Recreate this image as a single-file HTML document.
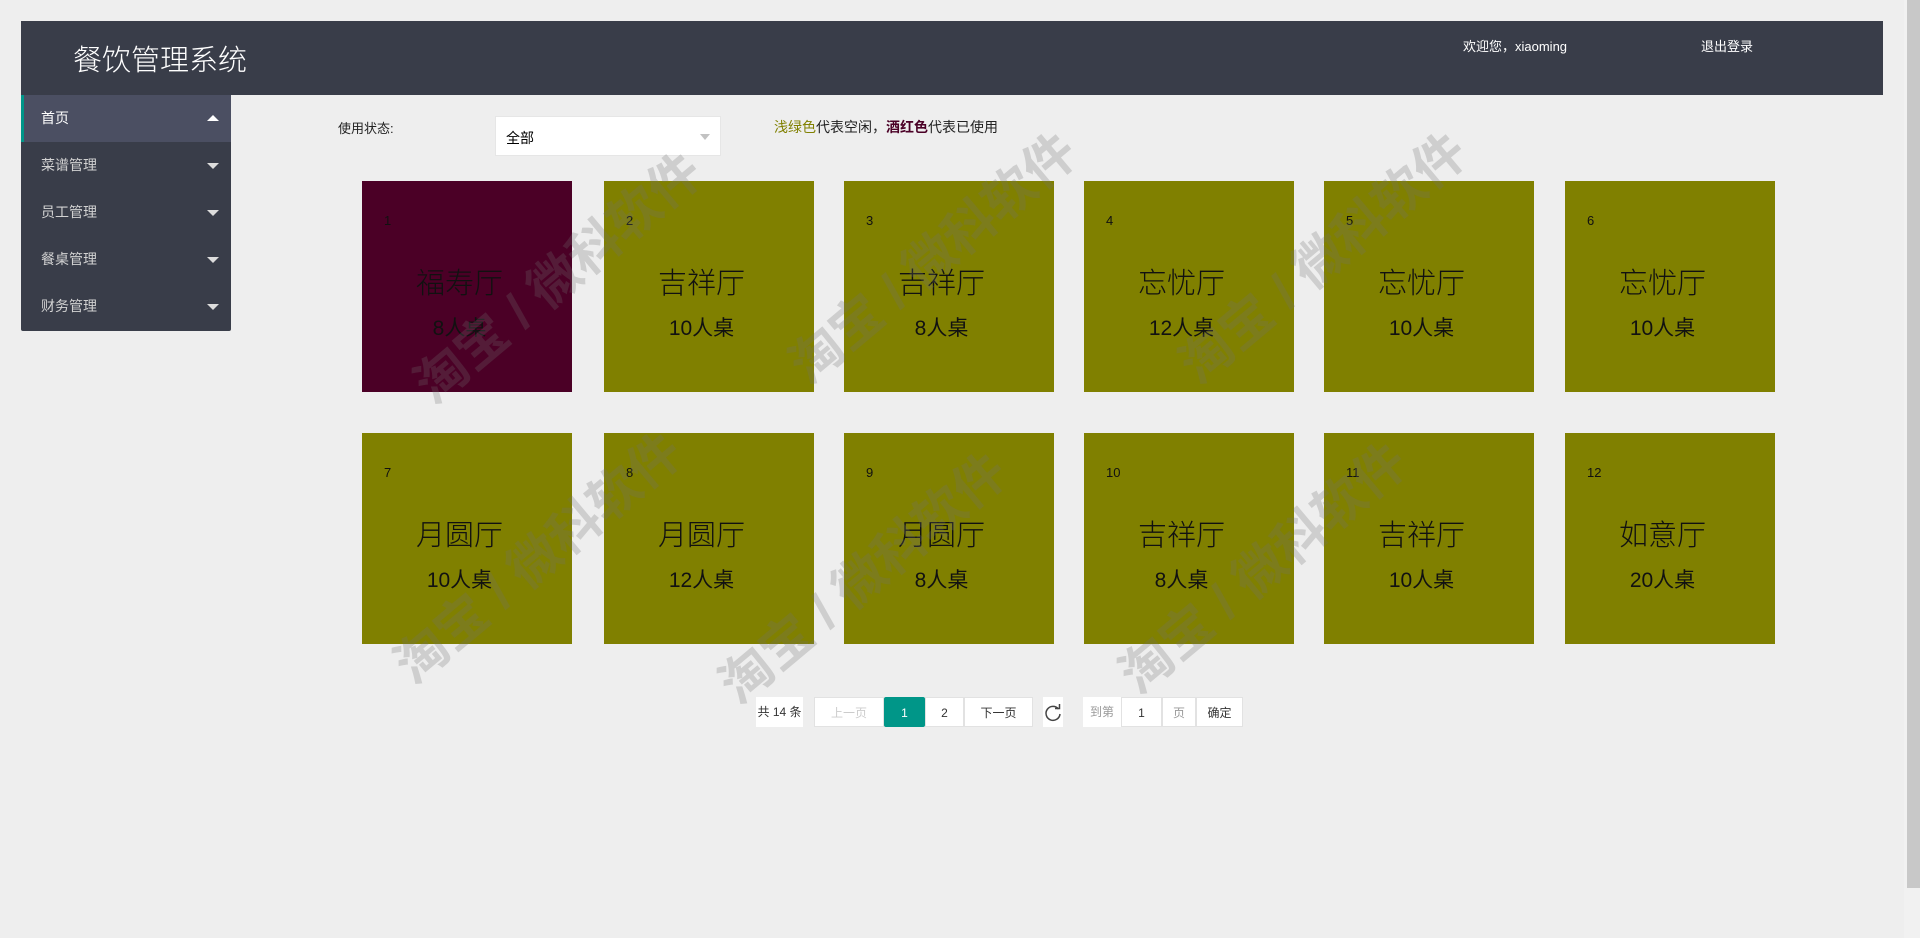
<!DOCTYPE html>
<html><head><meta charset="utf-8"><style>
*{margin:0;padding:0;box-sizing:border-box}
body{width:1920px;height:938px;background:#eeeeee;font-family:"Liberation Sans","Noto Sans CJK SC",sans-serif;position:relative;overflow:hidden}
.hdr{position:absolute;left:21px;top:21px;width:1862px;height:74px;background:#393d49;color:#fff}
.hdr .t{position:absolute;left:52px;top:16px;font-size:29px;font-weight:300}
.hdr .w{position:absolute;left:1442px;top:15px;font-size:13px}
.hdr .o{position:absolute;left:1680px;top:15px;font-size:13px}
.sb{position:absolute;right:0;top:0;width:16px;height:938px;background:#f1f1f1}
.sb div{position:absolute;left:3px;top:0;width:13px;height:888px;background:#c8c8c8}
.side{position:absolute;left:21px;top:95px;width:210px;height:236px;background:#393d49;border-radius:0 0 2px 2px}
.side .i{height:47px;line-height:47px;padding-left:20px;color:#d2d2d2;font-size:14px;position:relative}
.side .i.a{background:#4b4f62;border-left:3px solid #009688;padding-left:17px;color:#fff}
.ar{position:absolute;right:12px;top:21px;width:0;height:0;border-left:6px solid transparent;border-right:6px solid transparent;border-top:6px solid #ddd}
.a .ar{top:20px;border-top:none;border-bottom:6px solid #fff}
.lbl{position:absolute;left:338px;top:118px;font-size:13px;color:#222}
.sel{position:absolute;left:495px;top:116px;width:226px;height:40px;background:#fff;border:1px solid #e6e6e6;font-size:14px;padding:11px 10px}
.sel:after{content:"";position:absolute;right:10px;top:17px;border-left:5px solid transparent;border-right:5px solid transparent;border-top:6px solid #c2c2c2}
.leg{position:absolute;left:774px;top:117px;font-size:14px;color:#222}
.card{position:absolute;width:210px;height:211px;background:#808000;color:#111}
.card.r{background:#4b0026}
.card .n{position:absolute;left:22px;top:32px;font-size:13px}
.card .m{position:absolute;left:0;width:195px;text-align:center;top:79px;font-size:29px;font-weight:300}
.card .c{position:absolute;left:0;width:195px;text-align:center;top:131px;font-size:21px}
.pg{position:absolute;top:697px;height:30px;font-size:12px;line-height:30px;text-align:center;background:#fff;border:1px solid #e2e2e2;color:#333}
.wm{position:absolute;font-size:52px;font-weight:bold;color:rgba(110,110,110,.25);transform:rotate(-40deg);white-space:nowrap;transform-origin:left top}
</style></head><body>
<div class="hdr"><div class="t">餐饮管理系统</div><div class="w">欢迎您，xiaoming</div><div class="o">退出登录</div></div>
<div class="sb"><div></div></div>
<div class="side">
<div class="i a">首页<span class="ar"></span></div>
<div class="i">菜谱管理<span class="ar"></span></div>
<div class="i">员工管理<span class="ar"></span></div>
<div class="i">餐桌管理<span class="ar"></span></div>
<div class="i">财务管理<span class="ar"></span></div>
</div>
<div class="lbl">使用状态:</div>
<div class="sel">全部</div>
<div class="leg"><span style="color:#808000">浅绿色</span>代表空闲，<b style="color:#4b0026">酒红色</b>代表已使用</div>

<div class="card r" style="left:362px;top:181px"><div class="n">1</div><div class="m">福寿厅</div><div class="c">8人桌</div></div>
<div class="card" style="left:604px;top:181px"><div class="n">2</div><div class="m">吉祥厅</div><div class="c">10人桌</div></div>
<div class="card" style="left:844px;top:181px"><div class="n">3</div><div class="m">吉祥厅</div><div class="c">8人桌</div></div>
<div class="card" style="left:1084px;top:181px"><div class="n">4</div><div class="m">忘忧厅</div><div class="c">12人桌</div></div>
<div class="card" style="left:1324px;top:181px"><div class="n">5</div><div class="m">忘忧厅</div><div class="c">10人桌</div></div>
<div class="card" style="left:1565px;top:181px"><div class="n">6</div><div class="m">忘忧厅</div><div class="c">10人桌</div></div>
<div class="card" style="left:362px;top:433px"><div class="n">7</div><div class="m">月圆厅</div><div class="c">10人桌</div></div>
<div class="card" style="left:604px;top:433px"><div class="n">8</div><div class="m">月圆厅</div><div class="c">12人桌</div></div>
<div class="card" style="left:844px;top:433px"><div class="n">9</div><div class="m">月圆厅</div><div class="c">8人桌</div></div>
<div class="card" style="left:1084px;top:433px"><div class="n">10</div><div class="m">吉祥厅</div><div class="c">8人桌</div></div>
<div class="card" style="left:1324px;top:433px"><div class="n">11</div><div class="m">吉祥厅</div><div class="c">10人桌</div></div>
<div class="card" style="left:1565px;top:433px"><div class="n">12</div><div class="m">如意厅</div><div class="c">20人桌</div></div>

<div class="pg" style="left:756px;width:47px;border:none">共 14 条</div>
<div class="pg" style="left:814px;width:70px;color:#ccc">上一页</div>
<div class="pg" style="left:884px;width:41px;background:#009688;color:#fff;border-color:#009688;border-radius:2px">1</div>
<div class="pg" style="left:925px;width:39px">2</div>
<div class="pg" style="left:964px;width:69px">下一页</div>
<div class="pg" style="left:1043px;width:20px;border:none"><svg width="20" height="30" viewBox="0 0 20 30"><path d="M15.5 12A7 7 0 1 0 17 17" fill="none" stroke="#444" stroke-width="1.5"/><path d="M12 11.5L16.5 11.5 16.5 7" fill="none" stroke="#444" stroke-width="1.5"/></svg></div>
<div class="pg" style="left:1083px;width:38px;border:none;color:#999">到第</div>
<div class="pg" style="left:1121px;width:41px">1</div>
<div class="pg" style="left:1162px;width:34px;color:#999">页</div>
<div class="pg" style="left:1196px;width:47px">确定</div>

<div class="wm" style="left:395px;top:360px">淘宝 / 微科软件</div>
<div class="wm" style="left:770px;top:340px">淘宝 / 微科软件</div>
<div class="wm" style="left:1160px;top:340px">淘宝 / 微科软件</div>
<div class="wm" style="left:375px;top:640px">淘宝 / 微科软件</div>
<div class="wm" style="left:700px;top:660px">淘宝 / 微科软件</div>
<div class="wm" style="left:1100px;top:650px">淘宝 / 微科软件</div>
</body></html>
